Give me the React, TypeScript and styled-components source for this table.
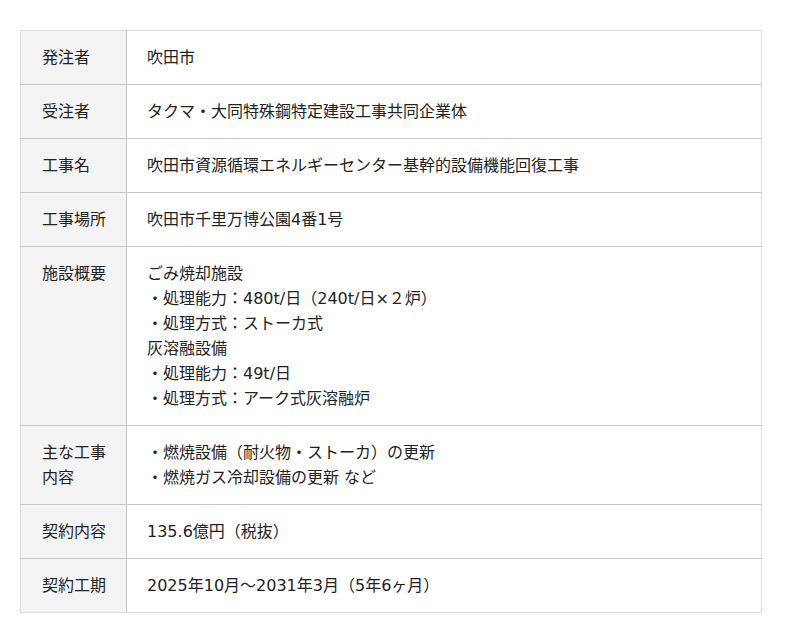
import React from "react";
import styled, { createGlobalStyle } from "styled-components";

const Global = createGlobalStyle`
  html, body { margin: 0; padding: 0; background: #fff; }
  body { font-family: "DejaVu Sans", "Noto Sans CJK JP", sans-serif; }
`;

const Page = styled.div`
  padding: 30px 20px;
`;

const Table = styled.table`
  width: 742px;
  border-collapse: collapse;
  font-size: 16px;
  line-height: 25px;
  color: #222;
  border: 1px solid #dcdcdc;
`;

const Row = styled.tr`
  border-bottom: 1px solid #c8c8c8;
  &:last-child { border-bottom: 1px solid #dcdcdc; }
`;

const Label = styled.th`
  width: 65px;
  background: #f4f4f4;
  font-weight: normal;
  text-align: left;
  vertical-align: top;
  padding: 14px 19px 14px 21px;
  border-right: 1px solid #c8c8c8;
`;

const Value = styled.td`
  text-align: left;
  vertical-align: top;
  padding: 14px 20px 14px 20px;
`;

const Line = styled.div``;

const rows: [string, string[]][] = [
  ["発注者", ["吹田市"]],
  ["受注者", ["タクマ・大同特殊鋼特定建設工事共同企業体"]],
  ["工事名", ["吹田市資源循環エネルギーセンター基幹的設備機能回復工事"]],
  ["工事場所", ["吹田市千里万博公園4番1号"]],
  [
    "施設概要",
    [
      "ごみ焼却施設",
      "・処理能力：480t/日（240t/日×２炉）",
      "・処理方式：ストーカ式",
      "灰溶融設備",
      "・処理能力：49t/日",
      "・処理方式：アーク式灰溶融炉",
    ],
  ],
  ["主な工事内容", ["・燃焼設備（耐火物・ストーカ）の更新", "・燃焼ガス冷却設備の更新 など"]],
  ["契約内容", ["135.6億円（税抜）"]],
  ["契約工期", ["2025年10月～2031年3月（5年6ヶ月）"]],
];

export default function App() {
  return (
    <Page>
      <Global />
      <Table>
        <tbody>
          {rows.map(([label, lines]) => (
            <Row key={label}>
              <Label>{label}</Label>
              <Value>
                {lines.map((l, i) => (
                  <Line key={i}>{l}</Line>
                ))}
              </Value>
            </Row>
          ))}
        </tbody>
      </Table>
    </Page>
  );
}
